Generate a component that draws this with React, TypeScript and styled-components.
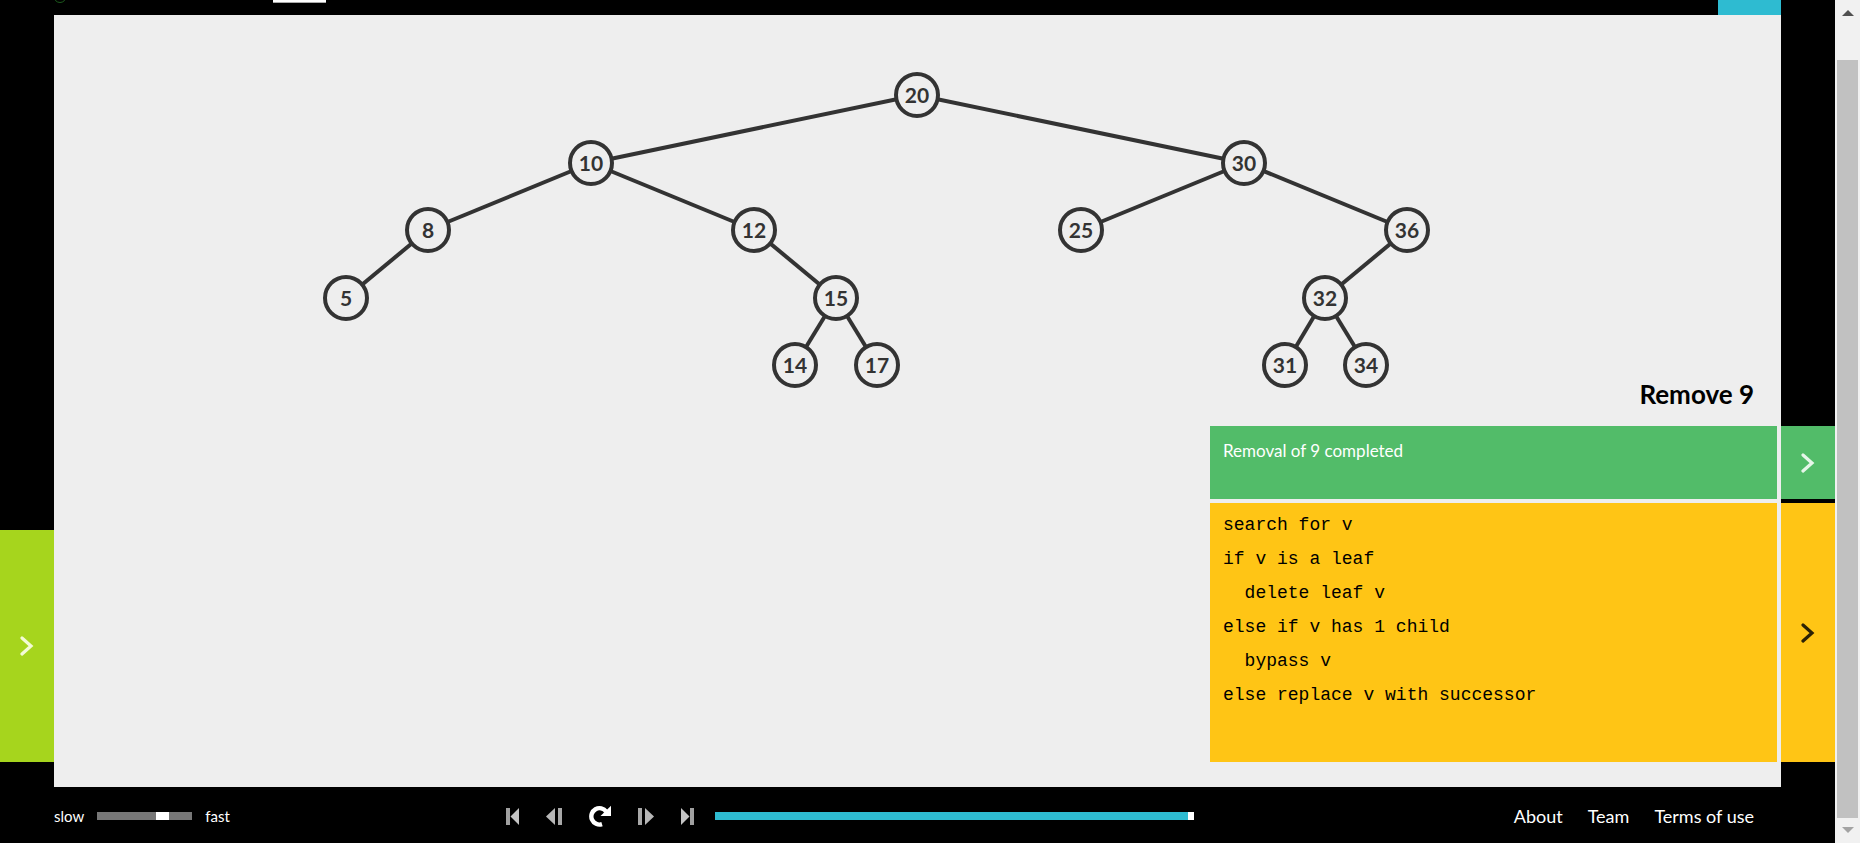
import React, { useState } from "react";
import styled, { createGlobalStyle } from "styled-components";

const GlobalStyle = createGlobalStyle`
  *, *::before, *::after { box-sizing: border-box; }
  body {
    margin: 0;
    background: #000;
    font-family: Lato, sans-serif;
  }
`;

const RAIL = "54px";

const Page = styled.div`
  display: grid;
  grid-template-columns: 1fr 25px;
  min-height: 100vh;
`;

const Viewer = styled.div`
  display: flex;
  flex-direction: column;
  min-width: 0;
  background: #000;
`;

const Header = styled.header`
  display: flex;
  align-items: flex-start;
  height: 15px;
  padding: 0 ${RAIL};
`;

const Logo = styled.svg`
  display: block;
  width: 12px;
  height: 4px;
`;

const HeaderField = styled.span`
  width: 53px;
  height: 3px;
  margin-left: 207px;
  background: #fff;
  border-bottom: 1px solid #aaa;
`;

const HeaderAction = styled.span`
  width: 63px;
  height: 15px;
  margin-left: auto;
  background: #2ebbd1;
`;

const Stage = styled.main`
  flex: 1;
  display: grid;
  grid-template-columns: ${RAIL} 1fr ${RAIL};
`;

const Rail = styled.div`
  display: flex;
  flex-direction: column;
  justify-content: flex-end;
  gap: 4px;
  padding-bottom: 25px;
`;

const Tab = styled.button<{ $bg: string; $fg: string; $height: number }>`
  display: flex;
  align-items: center;
  justify-content: center;
  width: 100%;
  height: ${(p) => p.$height}px;
  padding: 0;
  border: 0;
  background: ${(p) => p.$bg};
  color: ${(p) => p.$fg};
  cursor: pointer;
`;

const Canvas = styled.section`
  display: grid;
  background: #eee;
  min-width: 0;
`;

const Tree = styled.svg`
  grid-area: 1 / 1;
  justify-self: center;
  align-self: start;
  display: block;
  max-width: 100%;
  font-size: 21px;
  font-weight: 700;
`;

const Panels = styled.div`
  grid-area: 1 / 1;
  justify-self: end;
  align-self: end;
  display: flex;
  flex-direction: column;
  gap: 4px;
  width: 567px;
  max-width: 100%;
  margin: 0 4px 25px 0;
`;

const Title = styled.h1`
  margin: 0;
  padding: 0 23px 12px 0;
  font-size: 26px;
  line-height: 32px;
  font-weight: 700;
  text-align: right;
  color: #000;
`;

const Status = styled.p`
  margin: 0;
  height: 73px;
  padding: 12px 13px;
  font-size: 17px;
  line-height: 26px;
  background: #52bc69;
  color: #fff;
`;

const Code = styled.pre`
  margin: 0;
  height: 259px;
  padding: 5px 13px;
  font-family: "Liberation Mono", monospace;
  font-size: 18px;
  line-height: 34px;
  background: #ffc515;
  color: #000;
`;

const Footer = styled.footer`
  display: flex;
  align-items: center;
  height: 56px;
  padding: 2px 81px 0 ${RAIL};
  color: #fff;
`;

const Speed = styled.label`
  display: flex;
  align-items: center;
  gap: 13px;
  flex: 0 0 452px;
  font-size: 15px;
  line-height: 20px;
`;

const Slider = styled.input<{ $width: number; $thumb: number; $track: string }>`
  appearance: none;
  width: ${(p) => p.$width}px;
  height: 8px;
  margin: 0;
  background: ${(p) => p.$track};
  cursor: pointer;

  &::-webkit-slider-thumb {
    appearance: none;
    width: ${(p) => p.$thumb}px;
    height: 8px;
    background: #fff;
    border: 0;
    border-radius: 0;
  }
`;

const Playback = styled.div`
  display: flex;
  align-items: center;
  gap: 26px;
`;

const PlayButton = styled.button`
  display: flex;
  padding: 0;
  border: 0;
  background: none;
  cursor: pointer;
`;

const Progress = styled.div`
  display: flex;
  margin-left: 21px;
`;

const Links = styled.nav`
  display: flex;
  gap: 25px;
  margin-left: auto;
`;

const FooterLink = styled.a`
  font-size: 18px;
  line-height: 24px;
  color: #fff;
  text-decoration: none;
  white-space: nowrap;
`;

const ScrollBar = styled.div`
  display: flex;
  flex-direction: column;
  align-items: center;
  padding: 10px 0;
  background: #f1f1f1;
`;

const ScrollThumb = styled.div`
  flex: 1;
  width: 21px;
  margin: 44px 0 9px;
  background: #c1c1c1;
`;

const ScrollArrow = styled.svg<{ $color: string }>`
  display: block;
  width: 12px;
  height: 6px;
  fill: ${(p) => p.$color};
`;

type TreeNode = { value: number; x: number; y: number; parent?: number };

const nodes: TreeNode[] = [
  { value: 20, x: 863, y: 80 },
  { value: 10, x: 537, y: 148, parent: 20 },
  { value: 30, x: 1190, y: 148, parent: 20 },
  { value: 8, x: 374, y: 215, parent: 10 },
  { value: 12, x: 700, y: 215, parent: 10 },
  { value: 25, x: 1027, y: 215, parent: 30 },
  { value: 36, x: 1353, y: 215, parent: 30 },
  { value: 5, x: 292, y: 283, parent: 8 },
  { value: 15, x: 782, y: 283, parent: 12 },
  { value: 32, x: 1271, y: 283, parent: 36 },
  { value: 14, x: 741, y: 350, parent: 15 },
  { value: 17, x: 823, y: 350, parent: 15 },
  { value: 31, x: 1231, y: 350, parent: 32 },
  { value: 34, x: 1312, y: 350, parent: 32 },
];

const byValue = new Map(nodes.map((n) => [n.value, n]));

const code = `search for v
if v is a leaf
  delete leaf v
else if v has 1 child
  bypass v
else replace v with successor`;

function Chevron() {
  return (
    <svg width="14" height="20" viewBox="0 0 14 20" fill="none" stroke="currentColor" strokeWidth="3.2" strokeLinecap="round" aria-hidden="true">
      <path d="M2 2 L11 10 L2 18" />
    </svg>
  );
}

function BinaryTree() {
  return (
    <Tree width="1727" height="380" viewBox="0 0 1727 380" role="img" aria-label="Binary search tree">
      {nodes.map((n) => {
        const p = n.parent === undefined ? undefined : byValue.get(n.parent);
        return p && <line key={n.value} x1={p.x} y1={p.y} x2={n.x} y2={n.y} stroke="#333" strokeWidth="4" />;
      })}
      {nodes.map((n) => (
        <g key={n.value}>
          <circle cx={n.x} cy={n.y} r="21" fill="#eee" stroke="#333" strokeWidth="4" />
          <text x={n.x} y={n.y + 8} textAnchor="middle" fill="#333">{n.value}</text>
        </g>
      ))}
    </Tree>
  );
}

export default function App() {
  const [speed, setSpeed] = useState(72);
  const [step, setStep] = useState(100);

  return (
    <>
      <GlobalStyle />
      <Page>
        <Viewer>
          <Header>
            <Logo viewBox="0 0 12 4" aria-hidden="true">
              <circle cx="6" cy="-3.5" r="6" fill="none" stroke="#1d5c1d" strokeWidth="1" />
            </Logo>
            <HeaderField />
            <HeaderAction />
          </Header>

          <Stage>
            <Rail>
              <Tab type="button" aria-label="Show actions" $bg="#a6d51d" $fg="#f3fbd5" $height={232}>
                <Chevron />
              </Tab>
            </Rail>
            <Canvas>
              <BinaryTree />
              <Panels>
                <Title>Remove 9</Title>
                <Status>Removal of 9 completed</Status>
                <Code>{code}</Code>
              </Panels>
            </Canvas>
            <Rail>
              <Tab type="button" aria-label="Toggle status" $bg="#52bc69" $fg="#e6f6e9" $height={73}>
                <Chevron />
              </Tab>
              <Tab type="button" aria-label="Toggle code" $bg="#ffc515" $fg="#2b2205" $height={259}>
                <Chevron />
              </Tab>
            </Rail>
          </Stage>

          <Footer>
            <Speed>
              slow
              <Slider
                type="range"
                $width={95}
                $thumb={13}
                $track="#777"
                value={speed}
                onChange={(e) => setSpeed(Number(e.target.value))}
              />
              fast
            </Speed>
            <Playback>
              <PlayButton type="button" aria-label="Go to beginning">
                <svg width="14" height="17" viewBox="0 0 14 17">
                  <rect x="0" y="0" width="4" height="17" fill="#a0a0a0" />
                  <path d="M13 0 V17 L4.5 8.5 Z" fill="#c4c4c4" />
                </svg>
              </PlayButton>
              <PlayButton type="button" aria-label="Previous step">
                <svg width="17" height="17" viewBox="0 0 17 17">
                  <path d="M9 0 V17 L0 8.5 Z" fill="#b8b8b8" />
                  <rect x="12" y="0" width="4" height="17" fill="#a8a8a8" />
                </svg>
              </PlayButton>
              <PlayButton type="button" aria-label="Replay">
                <svg width="22" height="22" viewBox="0 0 22 22">
                  <path d="M13 19.2 A8.2 8.2 0 1 1 17.2 6.6" fill="none" stroke="#fff" strokeWidth="4.4" />
                  <path d="M22 0.8 V11 H11.5 Z" fill="#fff" />
                </svg>
              </PlayButton>
              <PlayButton type="button" aria-label="Next step">
                <svg width="17" height="17" viewBox="0 0 17 17">
                  <rect x="1" y="0" width="4" height="17" fill="#a8a8a8" />
                  <path d="M8 0 V17 L17 8.5 Z" fill="#b8b8b8" />
                </svg>
              </PlayButton>
              <PlayButton type="button" aria-label="Go to end">
                <svg width="14" height="17" viewBox="0 0 14 17">
                  <path d="M1 0 V17 L9.5 8.5 Z" fill="#c4c4c4" />
                  <rect x="10" y="0" width="4" height="17" fill="#a0a0a0" />
                </svg>
              </PlayButton>
            </Playback>
            <Progress>
              <Slider
                type="range"
                aria-label="Progress"
                $width={479}
                $thumb={6}
                $track="#2ebbd1"
                value={step}
                onChange={(e) => setStep(Number(e.target.value))}
              />
            </Progress>
            <Links>
              <FooterLink href="#about">About</FooterLink>
              <FooterLink href="#team">Team</FooterLink>
              <FooterLink href="#terms">Terms of use</FooterLink>
            </Links>
          </Footer>
        </Viewer>

        <ScrollBar aria-hidden="true">
          <ScrollArrow $color="#505050" viewBox="0 0 12 6">
            <path d="M0 6 L6 0 L12 6 Z" />
          </ScrollArrow>
          <ScrollThumb />
          <ScrollArrow $color="#a3a3a3" viewBox="0 0 12 6">
            <path d="M0 0 L6 6 L12 0 Z" />
          </ScrollArrow>
        </ScrollBar>
      </Page>
    </>
  );
}
